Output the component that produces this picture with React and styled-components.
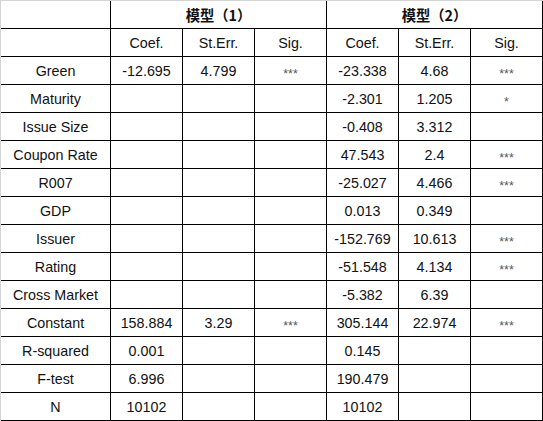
import styled, { createGlobalStyle } from 'styled-components';

const GlobalStyle = createGlobalStyle`
  html, body {
    margin: 0;
    padding: 0;
    background: #ffffff;
  }
`;

const rows = [
  ['Green', '-12.695', '4.799', '***', '-23.338', '4.68', '***'],
  ['Maturity', '', '', '', '-2.301', '1.205', '*'],
  ['Issue Size', '', '', '', '-0.408', '3.312', ''],
  ['Coupon Rate', '', '', '', '47.543', '2.4', '***'],
  ['R007', '', '', '', '-25.027', '4.466', '***'],
  ['GDP', '', '', '', '0.013', '0.349', ''],
  ['Issuer', '', '', '', '-152.769', '10.613', '***'],
  ['Rating', '', '', '', '-51.548', '4.134', '***'],
  ['Cross Market', '', '', '', '-5.382', '6.39', ''],
  ['Constant', '158.884', '3.29', '***', '305.144', '22.974', '***'],
  ['R-squared', '0.001', '', '', '0.145', '', ''],
  ['F-test', '6.996', '', '', '190.479', '', ''],
  ['N', '10102', '', '', '10102', '', ''],
];

const subHeads = ['Coef.', 'St.Err.', 'Sig.', 'Coef.', 'St.Err.', 'Sig.'];

export default function App() {
  return (
    <>
      <GlobalStyle />
      <Sheet>
        <Cell />
        <Cell span={3} bold>模型（1）</Cell>
        <Cell span={3} bold>模型（2）</Cell>
        <Cell />
        {subHeads.map((h, i) => (
          <Cell key={'h' + i}>{h}</Cell>
        ))}
        {rows.map((row, r) =>
          row.map((v, c) => (
            <Cell key={r + '-' + c}>
              {v.startsWith('*') ? <Stars>{v}</Stars> : v}
            </Cell>
          ))
        )}
      </Sheet>
    </>
  );
}

const Sheet = styled.div`
  display: grid;
  grid-template-columns: 109px repeat(6, 71px);
  grid-auto-rows: 27px;
  gap: 1px;
  background: #000000;
  border-top: 1px solid #d4d4d4;
  border-left: 1px solid #d4d4d4;
  padding: 0 1px 1px 0;
  box-sizing: border-box;
  height: 421px;
  width: 543px;
  font-family: 'Liberation Sans', 'Noto Sans CJK SC', sans-serif;
  font-size: 14.3px;
  color: #111111;
`;

const Cell = styled.div`
  grid-column: span ${p => p.span || 1};
  display: flex;
  align-items: center;
  justify-content: center;
  background: #ffffff;
  font-weight: ${p => (p.bold ? 700 : 400)};
  font-family: ${p => (p.bold ? "'Noto Sans CJK SC', sans-serif" : 'inherit')};
  white-space: nowrap;
`;

const Stars = styled.span`
  font-size: 12.5px;
  color: #555555;
  transform: translateY(3px);
`;
